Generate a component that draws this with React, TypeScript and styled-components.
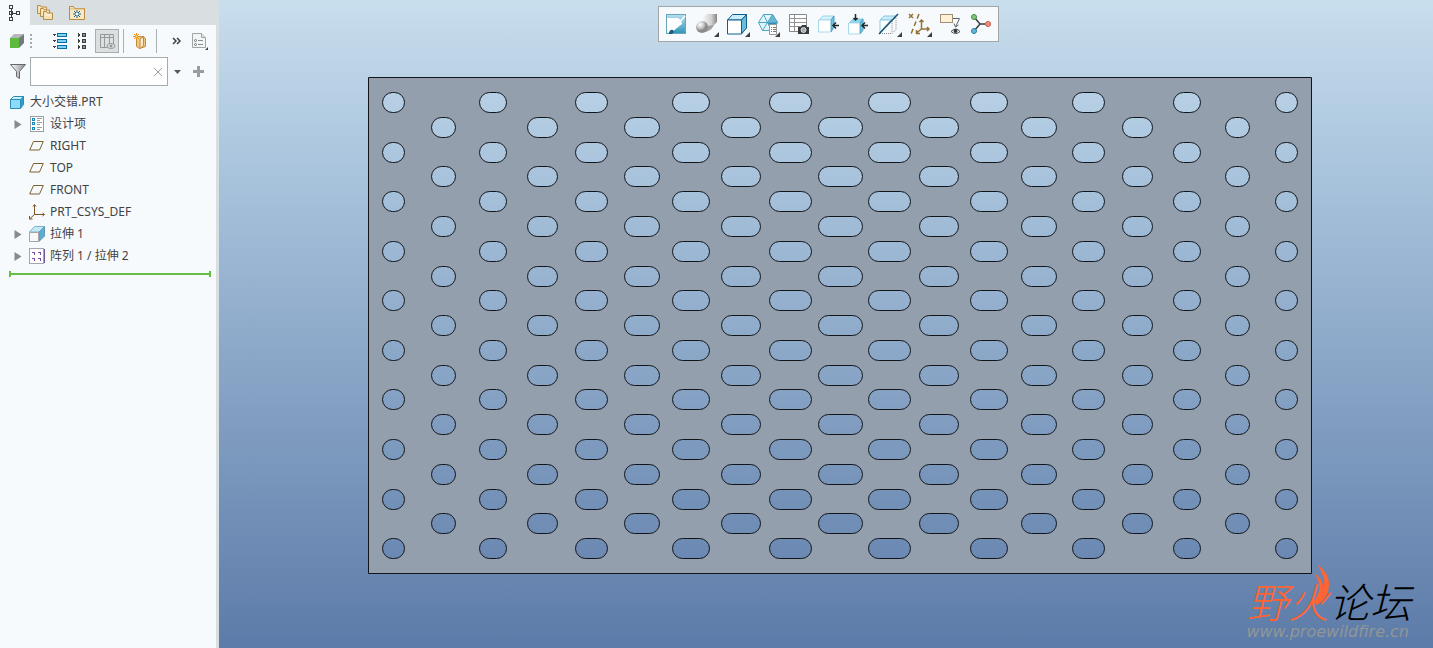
import React from 'react';
import styled, { createGlobalStyle } from 'styled-components';

const uiFont = '"Noto Sans", "Noto Sans CJK SC", sans-serif';

const GlobalStyle = createGlobalStyle`
  * { box-sizing: border-box; }
  html, body, #root { height: 100%; }
  body { margin: 0; font-family: ${uiFont}; font-size: 12px; color: #3f4346; }
  svg { display: block; overflow: visible; }
`;

const Shell = styled.div`
  display: flex;
  min-height: 100%;
  background: #f7fafc;
`;

const Sidebar = styled.aside`
  flex: 0 0 219px;
  display: flex;
  flex-direction: column;
  border-right: 3px solid #d9dfe0;
  background: #f7fafc;
`;

const Button = styled.button<{ $w?: number }>`
  display: flex;
  align-items: center;
  justify-content: center;
  width: ${(p) => (p.$w ? `${p.$w}px` : 'auto')};
  flex: none;
  padding: 0;
  border: 0;
  background: none;
  font: inherit;
  color: inherit;
`;

const Tabs = styled.nav`
  display: flex;
  height: 25px;
  margin-right: -3px;
  background: #d9dfe0;
`;

const Tab = styled(Button)<{ $active?: boolean }>`
  background: ${(p) => (p.$active ? '#f7fafc' : 'transparent')};
`;

const TreeTools = styled.div`
  display: flex;
  align-items: center;
  height: 32px;
  padding-left: 6px;
`;

const GripSlot = styled.span`
  width: 17px;
  padding-left: 3px;
`;

const PressedButton = styled(Button)`
  height: 24px;
  margin-left: 6px;
  border: 1px solid #a9adae;
  background: #dcdfe0;
`;

const Separator = styled.span`
  width: 1px;
  height: 24px;
  margin: 0 4px;
  background: #a9b0b2;
`;

const Search = styled.form`
  display: flex;
  align-items: center;
  height: 29px;
`;

const SearchIcon = styled.label`
  display: flex;
  justify-content: center;
  width: 30px;
  padding-left: 6px;
`;

const SearchBox = styled.div`
  display: flex;
  width: 138px;
  height: 29px;
  border: 1px solid #a3adae;
  background: #fff;
`;

const SearchInput = styled.input`
  flex: 1;
  min-width: 0;
  padding: 0 4px;
  border: 0;
  outline: 0;
  background: transparent;
  font: inherit;
`;

const Tree = styled.ul`
  margin: 5px 0 0;
  padding: 0;
  list-style: none;
`;

const TreeRow = styled.li<{ $root?: boolean }>`
  display: flex;
  align-items: center;
  height: 22px;
  padding-left: ${(p) => (p.$root ? 9 : 10)}px;
`;

const Label = styled.span`
  margin-left: 5px;
  line-height: 22px;
  white-space: nowrap;
`;

const TreeIcon = styled.span`
  display: flex;
  justify-content: center;
  width: 16px;
`;

const ExpandSlot = styled.span`
  display: flex;
  width: 19px;
  padding-left: 4px;
`;

const InsertMarker = styled.div`
  height: 6px;
  margin: 4px 5px 0 9px;
  border: solid #63c044;
  border-width: 0 2px;
  background: linear-gradient(#63c044, #63c044) center / 100% 2px no-repeat;
`;

const Viewport = styled.main`
  position: relative;
  flex: 1;
  min-width: 0;
  display: flex;
  flex-direction: column;
  align-items: center;
  padding-top: 6px;
  background: linear-gradient(#c9deed, #b0cae1 20%, #5c7ba8);
`;

const ViewTools = styled.div`
  display: grid;
  grid-template-columns: repeat(11, 1fr);
  width: 341px;
  height: 36px;
  margin-left: 4px;
  padding: 0 2px;
  border: 1px solid #a0a5a8;
  background: #f7fafc;
`;

const Model = styled.svg`
  margin: 35px 0 0 28px;
`;

const Watermark = styled.div`
  position: absolute;
  right: 22px;
  bottom: 7px;
  display: flex;
  flex-direction: column;
  align-items: flex-end;
`;

const Brand = styled.div`
  display: flex;
  font: italic 300 41px/46px "Noto Sans CJK SC", sans-serif;
  color: #000;
`;

const BrandAccent = styled.span`
  position: relative;
  color: #ff6432;
`;

const Flame = styled.svg`
  position: absolute;
  right: 0;
  top: -13px;
`;

const Site = styled.a`
  font: italic 16px/18px "DejaVu Sans", sans-serif;
  color: #929698;
  text-decoration: none;
  margin-right: 2px;
`;

const ink = '#3c4042';
const blue = '#0f5f8c';

const Corner = () => <path d="M25 20v5h-5z" fill="#3c4042" />;

const TreeTabIcon = () => (
  <svg width="12" height="16" fill="none" stroke={ink} shapeRendering="crispEdges">
    <path d="M2.5 4v8M3 8.500h5" />
    <rect x="0.500" y="0.500" width="3" height="3" /><rect x="0.500" y="6.500" width="3" height="3" />
    <rect x="0.500" y="12.500" width="3" height="3" /><rect x="7.500" y="6.500" width="3" height="3" />
  </svg>
);

const FoldersIcon = () => (
  <svg width="16" height="16" fill="#f6e1b4" stroke="#b98b47">
    {[0, 3, 6].map((d) => (
      <g key={d} transform={`translate(${d} ${d})`}>
        <path d="M.5 8.500v-8h3l1 1.500h5v6.500z" />
        <path d="M2 4h6" stroke="#fffaf0" />
      </g>
    ))}
  </svg>
);

const FavoritesIcon = () => (
  <svg width="16" height="14">
    <path d="M.5 13.500V.5h4l1 2h10v11z" fill="#f9e8c4" stroke="#b98b47" />
    <path d="M1 3h14" stroke="#d9b273" />
    <path d="M8 4v8M4 8h8M5 5l6 6M11 5l-6 6" stroke="#12658f" />
    <rect x="7" y="7" width="2" height="2" fill="#fff" />
  </svg>
);

const ModelIcon = () => (
  <svg width="14" height="14">
    <path d="M0 4 4 0h10l-4 4z" fill="#b4b8b9" /><path d="M9 4l5-4v9l-5 5z" fill="#75797b" />
    <path d="M0 4h9v10H0z" fill="#5cba3c" />
  </svg>
);

const Grip = () => (
  <svg width="2" height="14" fill="#a5abad">
    {[0, 4, 8, 12].map((y) => <rect key={y} y={y} width="2" height="2" />)}
  </svg>
);

const ExpandListIcon = () => (
  <svg width="15" height="16" shapeRendering="crispEdges">
    {[0, 6, 12].map((y) => (
      <g key={y}>
        <path d={`M0 ${y + 1}h4l-2 2z`} fill={ink} />
        <rect x="5.500" y={y + 0.5} width="9" height="3" fill="#7fd4f5" stroke="#0a6c9e" />
      </g>
    ))}
  </svg>
);

const CollapseListIcon = () => (
  <svg width="8" height="16" shapeRendering="crispEdges">
    {[0, 6, 12].map((y) => (
      <g key={y}>
        <path d={`M0 ${y}v4l2-2z`} fill={ink} />
        <rect x="4.500" y={y + 0.5} width="3" height="3" fill="#8b8f91" stroke={ink} />
      </g>
    ))}
  </svg>
);

const ColumnsIcon = () => (
  <svg width="14" height="16" fill="none" stroke="#94999b">
    <path d="M.5 1.500h13v13H.5zM0 4.500h14M4.500 2v12M9.500 2v9" />
    <ellipse cx="11" cy="13" rx="4" ry="2.500" fill="#dcdfe0" /><circle cx="11" cy="13" r="1" fill="#777" />
  </svg>
);

const NewFolderIcon = () => (
  <svg width="14" height="17">
    <path d="M3.500 3.500h7l2 2v8l-6 2-3-2z" fill="#f0c983" stroke="#bd8a40" />
    <path d="M7 6l3.500-2.500v9L7 15.500z" fill="#fce9c3" stroke="#bd8a40" />
    <path d="M3.500 0v7M0 3.500h7M1 1l5 5M6 1 1 6" stroke="#ef8b16" />
    <circle cx="3.500" cy="3.500" r="1" fill="#ffe27a" />
  </svg>
);

const MoreIcon = () => (
  <svg width="9" height="6" fill="none" stroke={ink} strokeWidth="1.500">
    <path d="M1 0l3 3-3 3M5 0l3 3-3 3" />
  </svg>
);

const SettingsIcon = () => (
  <svg width="16" height="18">
    <path d="M.5 1.500h9l4 4v10H.5z" fill="#f3f5f6" stroke="#a0a5a8" /><path d="M9.500 1.500v4h4" fill="#dde1e3" stroke="#a0a5a8" />
    <path d="M6 8.500h5M6 12.500h5" stroke="#888d90" />
    <circle cx="3.500" cy="8.500" r="1" fill="none" stroke="#777" /><circle cx="3.500" cy="12.500" r="1" fill="none" stroke="#777" />
    <path d="M16 15v3h-3z" fill={ink} />
  </svg>
);

const FilterIcon = () => (
  <svg width="16" height="15">
    <defs>
      <linearGradient id="funnel"><stop stopColor="#fff" /><stop offset="1" stopColor="#858a8c" /></linearGradient>
    </defs>
    <path d="M.5.5h15L9.500 7.500v7l-3-2v-5z" fill="url(#funnel)" stroke="#65696b" />
  </svg>
);

const PartIcon = () => (
  <svg width="14" height="13" stroke="#2f8db5">
    <path d="M.5 3.500l3-3h10l-3 3z" fill="#c3efff" /><path d="M10.500 3.500l3-3v8l-3 4z" fill="#2b9fd0" />
    <path d="M.5 3.500h10v9H.5z" fill="#8bdcf8" />
  </svg>
);

const DesignItemsIcon = () => (
  <svg width="14" height="16" shapeRendering="crispEdges">
    <rect x="0.500" y="0.500" width="13" height="15" fill="#fff" stroke="#9b9fa0" />
    {[2, 6, 11].map((y) => (
      <g key={y}>
        <rect x="2.500" y={y + 0.5} width="2" height="2" fill="#fff" stroke="#1489bd" />
        <path d={`M7 ${y + 0.5}h5M7 ${y + 2.5}h3`} stroke="#9b9fa0" />
      </g>
    ))}
  </svg>
);

const PlaneIcon = () => (
  <svg width="16" height="10" fill="none" stroke="#7c6031">
    <path d="M.7 9 4.500.5h9.800L10.500 9z" />
  </svg>
);

const CsysIcon = () => (
  <svg width="16" height="16" fill="none" stroke="#7c5520">
    <path d="M5.500 1v9.500H15M5.500 10.500.5 15" />
    <path d="M4 2.500 5.500.5 7 2.500M13.500 9l2 1.500-2 1.500M.5 12v3h3" />
  </svg>
);

const ExtrudeIcon = () => (
  <svg width="16" height="16">
    <path d="M.5 6 5.500.5h10L10 6z" fill="#c7e9f5" stroke="#7eb4cb" />
    <path d="M10 6l5.500-5.500v9.500l-5.500 5.500z" fill="#5aaed1" stroke="#5d9dba" />
    <path d="M.5 6.500h9v9h-9z" fill="#f8f8f8" stroke="#a4a4a4" />
  </svg>
);

const PatternIcon = () => (
  <svg width="16" height="16" shapeRendering="crispEdges">
    <rect x="0.500" y="0.500" width="14" height="15" fill="#fff" stroke="#a5a5b0" />
    <path d="M15 1v14" stroke="#6d5a90" />
    {[3, 9].map((x) => [4, 10].map((y) => (
      <path key={`${x}-${y}`} d={`M${x} ${y}h3v3h-1v-2h-2z`} fill="#7b4da6" />
    )))}
  </svg>
);

const ExpandArrow = () => (
  <svg width="8" height="9"><path d="M.5 0v9l7-4.500z" fill="#868b8d" /></svg>
);

const viewIcons: { name: string; drawing: React.ReactNode }[] = [
  {
    name: 'Refit',
    drawing: (
      <>
        <defs><linearGradient id="refit" x2="0" y2="1"><stop stopColor="#b5e2f1" /><stop offset="1" stopColor="#2f93b5" /></linearGradient></defs>
        <rect x="2.500" y="2.500" width="19" height="19" fill="url(#refit)" stroke="#6aa5b9" />
        <path d="M3 6 14 6Q18 8 18 12L8 20 3 21z" fill="#fff" />
        <path d="M21 4 9 18" stroke="#fff" strokeWidth="1.500" />
        <path d="M5 21q1-4 4-3l1 2-2 2H5z" fill="#175f7f" />
      </>
    ),
  },
  {
    name: 'Shading',
    drawing: (
      <>
        <defs>
          <linearGradient id="cyl"><stop stopColor="#f6f6f6" /><stop offset=".6" stopColor="#d0d0d0" /><stop offset="1" stopColor="#868686" /></linearGradient>
          <radialGradient id="ball" cx=".35" cy=".3"><stop stopColor="#fff" /><stop offset=".6" stopColor="#c8c8c8" /><stop offset="1" stopColor="#8b8b8b" /></radialGradient>
        </defs>
        <path d="M9 5l4-3h10v8l-4 4H9z" fill="url(#cyl)" />
        <path d="M12 20q6-2 8-7l-7 1z" fill="#a0a0a0" />
        <circle cx="8" cy="15" r="6" fill="url(#ball)" />
        <Corner />
      </>
    ),
  },
  {
    name: 'Saved orientations',
    drawing: (
      <>
        <g stroke={blue} strokeLinejoin="round">
          <path d="M2.500 8l5-5.500h14l-5 5.500z" fill="#c9edfa" /><path d="M16.500 8l5-5.500V16l-5 6z" fill="#68bddd" />
          <path d="M2.500 8h14v14h-14z" fill="#fff" />
        </g>
        <Corner />
      </>
    ),
  },
  {
    name: 'View manager',
    drawing: (
      <>
        <g stroke="#4fa5c6" strokeLinejoin="round">
          <path d="M8.500 2.500h9l5 8-6 8h-9l-4-8z" fill="#e2f7fd" />
          <path d="M17.500 2.500l5 8h-10z" fill="#6ab7d3" /><path d="M12.500 10.500h10l-6 8z" fill="#338eb3" />
          <path d="M8.500 2.500l4 8h-9M12.500 10.500l-5 8" fill="none" />
        </g>
        <path d="M14.500 12.500h7v10h-7z" fill="#fff" stroke="#999" /><path d="M16 15.500h1m1 0h3M16 17.500h1m1 0h3M16 19.500h1m1 0h3" stroke="#777" />
        <Corner />
      </>
    ),
  },
  {
    name: 'Save view image',
    drawing: (
      <>
        <path d="M3.500 2.500h17v17h-17z" fill="#fff" stroke="#888" /><path d="M4 6.500h16M4 10.500h16M4 14.500h16M8.500 3v16" stroke="#929292" />
        <path d="M12 15h3l1-2h4l1 2h2v7H12z" fill="#363a3c" /><circle cx="17.500" cy="18" r="2.500" fill="#a6aaad" stroke="#d8dadb" />
      </>
    ),
  },
  {
    name: 'Show right side',
    drawing: (
      <>
        <path d="M3 8l4-4h11l-3 4z" fill="#d5f2fc" stroke="#9fd3e6" /><path d="M15 8l3-4v11l-3 5z" fill="#6fc2e2" stroke="#4b9fc0" />
        <path d="M2.500 8h12v12h-12z" fill="#fff" stroke="#a9d9e9" />
        <path d="M17 13.500h6M20 10.500l-3 3 3 3" fill="none" stroke="#22282b" strokeWidth="1.500" />
      </>
    ),
  },
  {
    name: 'Show top side',
    drawing: (
      <>
        <path d="M3 11l4-4h10l-3 4z" fill="#8bd5f0" stroke="#8cc8de" /><path d="M14 11l3-4v11l-3 4z" fill="#6fc2e2" stroke="#4b9fc0" />
        <path d="M2.500 11h11v11h-11z" fill="#fff" stroke="#a9d9e9" />
        <path d="M9.500 2v6M7.500 6l2 2 2-2M16 13.500h6M19 10.500l-3 3 3 3" fill="none" stroke="#22282b" strokeWidth="1.500" />
      </>
    ),
  },
  {
    name: 'Section',
    drawing: (
      <>
        <path d="M3 8l4-4h12l-4 4z" fill="#c9edfa" stroke="#8cc8de" /><path d="M3 8h11L3 20z" fill="#fff" stroke="#8ccbe0" />
        <path d="M3 21.500h12l4-4V5L15 9v12" fill="none" stroke="#8a8e90" strokeDasharray="1 1" />
        <path d="M2 22 21 2" stroke="#17506e" strokeWidth="1.500" />
        <Corner />
      </>
    ),
  },
  {
    name: 'Datum display',
    drawing: (
      <>
        <g fill="none" stroke="#957135" strokeWidth="1.500">
          <path d="M2 2l4 4M6 2 2 6" /><path d="M12 2 4 22" strokeDasharray="5 3" />
          <path d="M14.500 8v9H22M14.500 17l-5 4M12.500 10l2-2 2 2M20 15l2 2-2 2M9.500 18v3.500H13" />
        </g>
        <Corner />
      </>
    ),
  },
  {
    name: 'Annotation display',
    drawing: (
      <>
        <rect x="2.500" y="2.500" width="12" height="8" fill="#fff0d8" stroke="#a08e75" />
        <path d="M15 6.500h6.500L17.500 15M16 11.500l1.500 3.500 3-2" fill="none" stroke="#61666a" />
        <path d="M13 19.500q5-5 9 0-4 4-9 0z" fill="#fff" stroke="#4d5153" /><circle cx="17.500" cy="19" r="2" fill="#36393b" />
      </>
    ),
  },
  {
    name: 'Spin center',
    drawing: (
      <>
        <path d="M6 5l6 7h7M12 12l-6 7" fill="none" stroke="#383c3e" strokeWidth="1.500" />
        <circle cx="6" cy="5" r="2.500" fill="#85c77d" stroke="#438c42" /><circle cx="20" cy="12" r="2.500" fill="#f29083" stroke="#c75546" />
        <circle cx="6" cy="19" r="2.500" fill="#69b8db" stroke="#277ca4" />
      </>
    ),
  },
];

const treeItems = [
  { label: '设计项', icon: <DesignItemsIcon />, expandable: true },
  { label: 'RIGHT', icon: <PlaneIcon /> },
  { label: 'TOP', icon: <PlaneIcon /> },
  { label: 'FRONT', icon: <PlaneIcon /> },
  { label: 'PRT_CSYS_DEF', icon: <CsysIcon /> },
  { label: '拉伸 1', icon: <ExtrudeIcon />, expandable: true },
  { label: '阵列 1 / 拉伸 2', icon: <PatternIcon />, expandable: true },
];

/* Slot widths grow from the outer columns towards the middle one. */
const halfWidths = [22, 24, 27, 30, 32, 35, 37, 39, 42, 44];

const slots = Array.from({ length: 19 }, (_, col) => {
  const width = halfWidths[Math.min(col, 18 - col)];
  return Array.from({ length: 19 }, (_, row) => ({ col, row, width })).filter((s) => (s.col + s.row) % 2 === 0);
}).flat();

const slotPath = (col: number, row: number, w: number) => {
  const x = Math.round(25 + col * 49.62 - w / 2) + 0.5;
  const y = Math.round(15 + row * 24.79) + 0.5;
  return `M${x + 10} ${y}h${w - 20}a10 10 0 0 1 0 20h${20 - w}a10 10 0 0 1 0-20z`;
};

const PerforatedPlate = () => (
  <Model width="944" height="497" role="img" aria-label="Perforated plate">
    <path
      d={`M.5.5h943v496H.5z${slots.map((s) => slotPath(s.col, s.row, s.width)).join('')}`}
      fill="#949fad"
      fillRule="evenodd"
      stroke="#11151a"
    />
  </Model>
);

export default function App() {
  return (
    <>
      <GlobalStyle />
      <Shell>
        <Sidebar>
          <Tabs>
            <Tab $w={30} $active aria-label="Model tree"><TreeTabIcon /></Tab>
            <Tab $w={30} aria-label="Folder browser"><FoldersIcon /></Tab>
            <Tab $w={34} aria-label="Favorites"><FavoritesIcon /></Tab>
          </Tabs>
          <TreeTools>
            <Button $w={21} aria-label="Model"><ModelIcon /></Button>
            <GripSlot><Grip /></GripSlot>
            <Button $w={31} aria-label="Expand all"><ExpandListIcon /></Button>
            <Button $w={14} aria-label="Collapse all"><CollapseListIcon /></Button>
            <PressedButton $w={24} aria-label="Tree columns"><ColumnsIcon /></PressedButton>
            <Separator />
            <Button $w={24} aria-label="New group"><NewFolderIcon /></Button>
            <Separator />
            <Button $w={31} aria-label="More"><MoreIcon /></Button>
            <Button $w={16} aria-label="Tree settings"><SettingsIcon /></Button>
          </TreeTools>
          <Search onSubmit={(e) => e.preventDefault()}>
            <SearchIcon htmlFor="tree-filter" aria-label="Filter"><FilterIcon /></SearchIcon>
            <SearchBox>
              <SearchInput id="tree-filter" type="text" />
              <Button $w={18} type="button" aria-label="Clear">
                <svg width="8" height="8" stroke="#9a9fa1"><path d="M0 0l8 8M8 0 0 8" /></svg>
              </Button>
            </SearchBox>
            <Button $w={19} type="button" aria-label="Filter options">
              <svg width="7" height="4"><path d="M0 0h7L3.500 4z" fill="#55595b" /></svg>
            </Button>
            <Button $w={23} type="button" aria-label="Add filter">
              <svg width="11" height="11" stroke="#989d9f" strokeWidth="3"><path d="M5.500 0v11M0 5.500h11" /></svg>
            </Button>
          </Search>
          <Tree>
            <TreeRow $root>
              <TreeIcon><PartIcon /></TreeIcon>
              <Label>大小交错.PRT</Label>
            </TreeRow>
            {treeItems.map((item) => (
              <TreeRow key={item.label}>
                <ExpandSlot>{item.expandable && <ExpandArrow />}</ExpandSlot>
                <TreeIcon>{item.icon}</TreeIcon>
                <Label>{item.label}</Label>
              </TreeRow>
            ))}
          </Tree>
          <InsertMarker />
        </Sidebar>
        <Viewport>
          <ViewTools>
            {viewIcons.map((icon) => (
              <Button key={icon.name} aria-label={icon.name}>
                <svg width="24" height="24">{icon.drawing}</svg>
              </Button>
            ))}
          </ViewTools>
          <PerforatedPlate />
          <Watermark>
            <Brand>
              <BrandAccent>
                野火
                <Flame width="17" height="41" fill="#ff6432">
                  <path d="M5 0Q17 9 17 20 17 34 5 41L2 39Q14 27 12 15 10 7 5 0z" />
                  <path d="M2 9Q9 13 11 21 12 30 5 41L1 38Q9 28 7 21 6 14 2 9z" />
                </Flame>
              </BrandAccent>
              <span>论坛</span>
            </Brand>
            <Site href="#">www.proewildfire.cn</Site>
          </Watermark>
        </Viewport>
      </Shell>
    </>
  );
}
